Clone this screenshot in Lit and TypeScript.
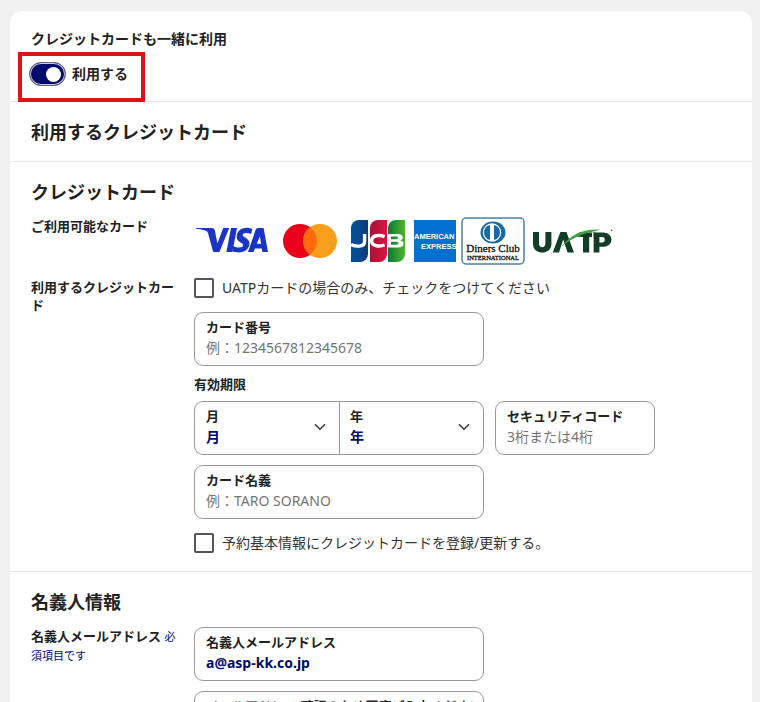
import { LitElement, html, css, svg } from "lit";
import { customElement, property } from "lit/decorators.js";

const baseStyles = css`
  * {
    box-sizing: border-box;
  }
  :host {
    font-family: "Noto Sans", "Noto Sans CJK JP", sans-serif;
    color: #222;
  }
`;

const fieldStyles = css`
  .field {
    display: flex;
    flex-direction: column;
    height: 54px;
    padding: 4px 11px 0;
    border: 1px solid #999;
    border-radius: 9px;
    background: #fff;
  }
  .field-label {
    height: 20px;
    font-size: 13px;
    line-height: 20px;
    font-weight: 700;
    white-space: nowrap;
  }
  .control {
    width: 100%;
    height: 22px;
    margin: 0;
    padding: 0;
    border: 0;
    outline: 0;
    background: transparent;
    font-family: inherit;
    font-size: 14px;
    line-height: 22px;
    font-weight: 700;
    color: #000b6b;
  }
  .control::placeholder {
    color: #757575;
    font-weight: 400;
    opacity: 1;
  }
`;

@customElement("text-field")
export class TextField extends LitElement {
  @property() label = "";
  @property() placeholder = "";
  @property() value = "";
  @property() type = "text";

  static styles = [
    baseStyles,
    fieldStyles,
    css`
      :host {
        display: block;
      }
    `,
  ];

  render() {
    return html`<div class="field">
      <label class="field-label" for="input">${this.label}</label>
      <input
        class="control"
        id="input"
        type=${this.type}
        placeholder=${this.placeholder}
        .value=${this.value}
      />
    </div>`;
  }
}

@customElement("select-field")
export class SelectField extends LitElement {
  @property() label = "";
  @property({ attribute: false }) options: string[] = [];

  static styles = [
    baseStyles,
    fieldStyles,
    css`
      :host {
        display: block;
        flex: 1;
      }
      :host(:first-child) .field {
        border-right: 0;
        border-radius: 9px 0 0 9px;
      }
      :host(:last-child) .field {
        padding-left: 10px;
        border-radius: 0 9px 9px 0;
      }
      .field {
        display: grid;
        grid-template-columns: 1fr 12px;
        grid-template-rows: 20px 22px;
        padding-right: 13px;
      }
      .control {
        appearance: none;
        grid-column: 1 / 3;
        grid-row: 2;
      }
      .chevron {
        grid-column: 2;
        grid-row: 1 / 3;
        align-self: center;
        pointer-events: none;
      }
    `,
  ];

  render() {
    return html`<div class="field">
      <label class="field-label" for="select">${this.label}</label>
      <select class="control" id="select">
        <option>${this.label}</option>
        ${this.options.map((o) => html`<option>${o}</option>`)}
      </select>
      <svg class="chevron" width="12" height="8" viewBox="0 0 12 8" aria-hidden="true">
        <path d="M1 1.2 6 6.2 11 1.2" fill="none" stroke="#333" stroke-width="1.5" />
      </svg>
    </div>`;
  }
}

@customElement("check-row")
export class CheckRow extends LitElement {
  @property() label = "";

  static styles = [
    baseStyles,
    css`
      :host {
        display: block;
      }
      .row {
        display: flex;
        align-items: center;
        gap: 8px;
        height: 20px;
        font-size: 14px;
        line-height: 20px;
        color: #333;
      }
      .box {
        appearance: none;
        flex: none;
        width: 20px;
        height: 20px;
        margin: 0;
        border: 2px solid #555;
        border-radius: 2px;
        background: #fff;
      }
      .box:checked {
        background: #000b6b;
      }
    `,
  ];

  render() {
    return html`<label class="row"
      ><input class="box" type="checkbox" /><span>${this.label}</span></label
    >`;
  }
}

const visa = svg`<svg width="74" height="28" viewBox="0 0 74 28" role="img" aria-label="VISA">
  <g fill="#1a34c8">
    <path d="M1 1H16.5C18.6 1 19.6 2.2 20 4.2L22.4 16.5 28.2 1H34.2L24.4 25H18.2L13.1 6.4C12.6 4.6 11.5 3.7 9.6 3.2 7 2.4 4 2 1 1.8Z" />
    <path d="M36 1H42L37.4 25H31.4Z" />
    <path d="M57.2 2 56.2 7.1C54.5 6.3 53 5.9 51.2 5.9 48.8 5.9 47.7 6.8 47.6 7.8 47.4 10.4 55 11.2 54.4 17 53.9 22.4 49.6 25.4 43.6 25.4 40.8 25.4 38.8 24.9 37.3 24.2L38.3 19C40.1 20 41.9 20.5 44.1 20.5 46.5 20.5 48.1 19.7 48.2 18.3 48.4 15.6 41.2 15 41.6 9.2 42 4.2 46 .7 51.8 .7 54 .7 55.8 1.3 57.2 2Z" />
    <path fill-rule="evenodd" d="M63 1H68.6L73 25H67.4L66.7 21.4H60L58.4 25H53L60.6 3C61.1 1.7 61.8 1 63 1ZM64.8 9.6 61.8 16.8H66.1Z" />
  </g>
</svg>`;

const mastercard = svg`<svg width="54" height="34" viewBox="0 0 54 34" role="img" aria-label="Mastercard">
  <circle cx="17" cy="17" r="17" fill="#eb001b" />
  <circle cx="37" cy="17" r="17" fill="#f79e1b" />
  <path d="M27 3.3A17 17 0 0 1 27 30.7 17 17 0 0 1 27 3.3Z" fill="#ff6a10" />
</svg>`;

const jcb = svg`<svg width="54" height="42" viewBox="0 0 54 42" role="img" aria-label="JCB">
  <defs>
    <linearGradient id="jb"><stop offset="0" stop-color="#00539b" /><stop offset="1" stop-color="#133a7c" /></linearGradient>
    <linearGradient id="jr"><stop offset="0" stop-color="#a71236" /><stop offset="1" stop-color="#dc1440" /></linearGradient>
    <linearGradient id="jg"><stop offset="0" stop-color="#087a38" /><stop offset="1" stop-color="#52b52c" /></linearGradient>
  </defs>
  <path d="M8 0H17V34A8 8 0 0 1 9 42H0V8A8 8 0 0 1 8 0Z" fill="url(#jb)" />
  <path d="M27 0H36V34A8 8 0 0 1 28 42H19V8A8 8 0 0 1 27 0Z" fill="url(#jr)" />
  <path d="M45 0H54V34A8 8 0 0 1 46 42H37V8A8 8 0 0 1 45 0Z" fill="url(#jg)" />
  <g fill="none" stroke="#fff" stroke-width="3.4">
    <path d="M13.6 14V21.5C13.6 27.6 4 26.6 0 24.6" />
    <path d="M33.6 16.6C29 14.8 20.6 14.8 20.6 20.8 20.6 26.8 29 26.6 33.6 25" />
  </g>
  <path fill="#fff" fill-rule="evenodd" d="M36 14H47C53 14 53 19.6 49 20.5 54 21.2 53.6 27.4 47.6 27.4H36ZM40 16.6V19.3H45.4C47.6 19.3 47.6 16.6 45.4 16.6ZM40 21.8V24.8H45.8C48.2 24.8 48.2 21.8 45.8 21.8Z" />
</svg>`;

const amex = svg`<svg width="43" height="42" viewBox="0 0 43 42" role="img" aria-label="American Express">
  <rect width="42" height="42" fill="#0070d1" />
  <g font-family="Liberation Sans, sans-serif" font-weight="700" font-size="7.5" fill="#fff">
    <text x="0" y="19">AMERICAN</text>
    <text x="7" y="29">EXPRESS</text>
  </g>
</svg>`;

const diners = svg`<svg width="64" height="48" viewBox="0 0 64 48" role="img" aria-label="Diners Club International">
  <rect x="1" y="1" width="62" height="46" rx="4" fill="#fff" stroke="#4a7fa8" stroke-width="1.5" />
  <ellipse cx="32" cy="15.5" rx="12.5" ry="11" fill="#1769aa" />
  <circle cx="31" cy="15.5" r="9.2" fill="#fff" />
  <path d="M29 8A7.7 7.7 0 0 0 29 23ZM33 8A7.7 7.7 0 0 1 33 23Z" fill="#1769aa" />
  <g font-family="Liberation Serif, serif" fill="#111" stroke="#111" stroke-width="0.3" text-anchor="middle">
    <text x="32" y="35" font-size="11">Diners Club</text>
    <text x="32" y="43" font-size="6.5">INTERNATIONAL</text>
  </g>
</svg>`;

const uatp = svg`<svg width="80" height="26" viewBox="0 0 80 26" role="img" aria-label="UATP">
  <g fill="#123d26">
    <path d="M0 4H6V15.5C6 20.6 12.4 20.6 12.4 15.5V4H18.4V16C18.4 27.4 0 27.4 0 16Z" />
    <path d="M27.4 4H33.4L41 24.6H34.6L30.2 11.6 26 24.6H19.8Z" />
    <path d="M41 8.4 46 4.6H62.6V9H56.2V24.6H50V9Z" />
    <path fill-rule="evenodd" d="M60.4 4.6H69.6C81.4 4.6 81.4 18.8 69.6 18.8H66.4V24.6H60.4ZM66.4 9V14.4H69C72.8 14.4 72.8 9 69 9Z" />
  </g>
  <path d="M64 3.4V24.6" stroke="#fff" stroke-width="0" />
  <path d="M28.6 18.4C37 8 48 .6 67 1.6 62 3.4 51 5.4 46 8 40 10.6 34 14 28.6 18.4Z" fill="#43a047" />
  <path d="M59 4.6H60.4V24.6H59Z" fill="#fff" />
  <circle cx="78.6" cy="2.4" r=".8" fill="#456" />
</svg>`;

@customElement("app-root")
export class AppRoot extends LitElement {
  static styles = [
    baseStyles,
    css`
      :host {
        display: block;
        height: 100vh;
        overflow: hidden;
        padding: 11px 8px 0 10px;
        background: #f0f0f0;
      }
      .card {
        min-height: 100%;
        background: #fff;
        border-radius: 12px 12px 0 0;
      }
      .section {
        padding: 0 21px;
        border-bottom: 1px solid #e6e6e6;
      }
      .section:last-child {
        border-bottom: 0;
      }
      .toggle-section {
        height: 91px;
        padding-top: 18px;
      }
      .toggle-title {
        margin: 0;
        font-size: 14px;
        line-height: 20px;
        font-weight: 700;
      }
      .highlight {
        display: flex;
        align-items: flex-start;
        width: 127px;
        height: 50px;
        margin: 3px 0 0 -13px;
        padding: 6px 0 0 7px;
        border: 4px solid #dc1414;
      }
      .toggle {
        display: flex;
        align-items: center;
        gap: 6px;
        font-size: 14px;
        line-height: 24px;
        font-weight: 700;
      }
      .switch {
        appearance: none;
        display: flex;
        justify-content: flex-start;
        align-items: center;
        width: 37px;
        height: 24px;
        margin: 0;
        padding: 0 4px;
        border: 1px solid #667;
        border-radius: 12px;
        background: #777;
        box-shadow: inset 0 0 0 1px #c5c7de;
      }
      .switch::before {
        content: "";
        width: 15px;
        height: 15px;
        border-radius: 50%;
        background: #fff;
      }
      .switch:checked {
        justify-content: flex-end;
        background: #000b6b;
      }
      .title {
        margin: 0;
        font-size: 18px;
        line-height: 24px;
        font-weight: 700;
      }
      .heading-section {
        padding-top: 18px;
        padding-bottom: 17px;
      }
      .card-section {
        padding-top: 18px;
        padding-bottom: 18px;
      }
      .grid {
        display: grid;
        grid-template-columns: 149px minmax(0, 1fr);
        column-gap: 14px;
      }
      .row-label {
        font-size: 13px;
        line-height: 18px;
        font-weight: 700;
      }
      .required {
        font-size: 11px;
        font-weight: 400;
        color: #000b6b;
      }
      .brand-row {
        margin-top: 13px;
      }
      .brands {
        display: flex;
        align-items: center;
        height: 48px;
        padding-left: 1px;
      }
      .brands svg {
        flex: none;
      }
      .brand-mc {
        margin-left: 14px;
      }
      .brand-jcb {
        margin-left: 14px;
      }
      .brand-amex {
        margin-left: 9px;
      }
      .brand-diners {
        margin-left: 4px;
      }
      .brand-uatp {
        margin-left: 8px;
      }
      .brand {
        display: flex;
      }
      .input-row {
        margin-top: 13px;
      }
      .stack {
        display: flex;
        flex-direction: column;
        align-items: stretch;
      }
      .field-width {
        width: 290px;
        max-width: 100%;
      }
      .number {
        margin-top: 14px;
      }
      .expiry {
        margin: 0;
        padding: 0;
        border: 0;
        min-width: 0;
      }
      .expiry-title {
        padding: 8px 0 7px;
        font-size: 13px;
        line-height: 20px;
        font-weight: 700;
      }
      .expiry-row {
        display: flex;
        gap: 11px;
      }
      .selects {
        display: flex;
      }
      .code {
        width: 160px;
      }
      .holder {
        margin: 10px 0 14px;
      }
      .mail-section {
        padding-top: 18px;
      }
      .mail-row {
        margin-top: 13px;
      }
      .mails {
        display: flex;
        flex-direction: column;
        gap: 10px;
      }
    `,
  ];

  render() {
    const months = Array.from({ length: 12 }, (_, i) => `${i + 1}`);
    const years = Array.from({ length: 10 }, (_, i) => `${2025 + i}`);
    return html`<main class="card">
      <section class="section toggle-section">
        <h3 class="toggle-title">クレジットカードも一緒に利用</h3>
        <div class="highlight">
          <label class="toggle"
            ><input class="switch" type="checkbox" role="switch" checked /><span>利用する</span></label
          >
        </div>
      </section>
      <section class="section heading-section">
        <h2 class="title">利用するクレジットカード</h2>
      </section>
      <section class="section card-section">
        <h2 class="title">クレジットカード</h2>
        <div class="grid brand-row">
          <div class="row-label">ご利用可能なカード</div>
          <div class="brands">
            <span class="brand">${visa}</span>
            <span class="brand brand-mc">${mastercard}</span>
            <span class="brand brand-jcb">${jcb}</span>
            <span class="brand brand-amex">${amex}</span>
            <span class="brand brand-diners">${diners}</span>
            <span class="brand brand-uatp">${uatp}</span>
          </div>
        </div>
        <div class="grid input-row">
          <div class="row-label">利用するクレジットカード</div>
          <div class="stack">
            <check-row label="UATPカードの場合のみ、チェックをつけてください"></check-row>
            <text-field
              class="field-width number"
              label="カード番号"
              placeholder="例：1234567812345678"
            ></text-field>
            <fieldset class="expiry">
              <legend class="expiry-title">有効期限</legend>
              <div class="expiry-row">
                <div class="selects field-width">
                  <select-field label="月" .options=${months}></select-field>
                  <select-field label="年" .options=${years}></select-field>
                </div>
                <text-field class="code" label="セキュリティコード" placeholder="3桁または4桁"></text-field>
              </div>
            </fieldset>
            <text-field
              class="field-width holder"
              label="カード名義"
              placeholder="例：TARO SORANO"
            ></text-field>
            <check-row label="予約基本情報にクレジットカードを登録/更新する。"></check-row>
          </div>
        </div>
      </section>
      <section class="section mail-section">
        <h2 class="title">名義人情報</h2>
        <div class="grid mail-row">
          <div class="row-label">
            名義人メールアドレス <span class="required">必須項目です</span>
          </div>
          <div class="mails">
            <text-field
              class="field-width"
              type="email"
              label="名義人メールアドレス"
              value="a@asp-kk.co.jp"
            ></text-field>
            <text-field
              class="field-width"
              type="email"
              label="メールアドレス 確認のため再度ご入力ください"
            ></text-field>
          </div>
        </div>
      </section>
    </main>`;
  }
}
